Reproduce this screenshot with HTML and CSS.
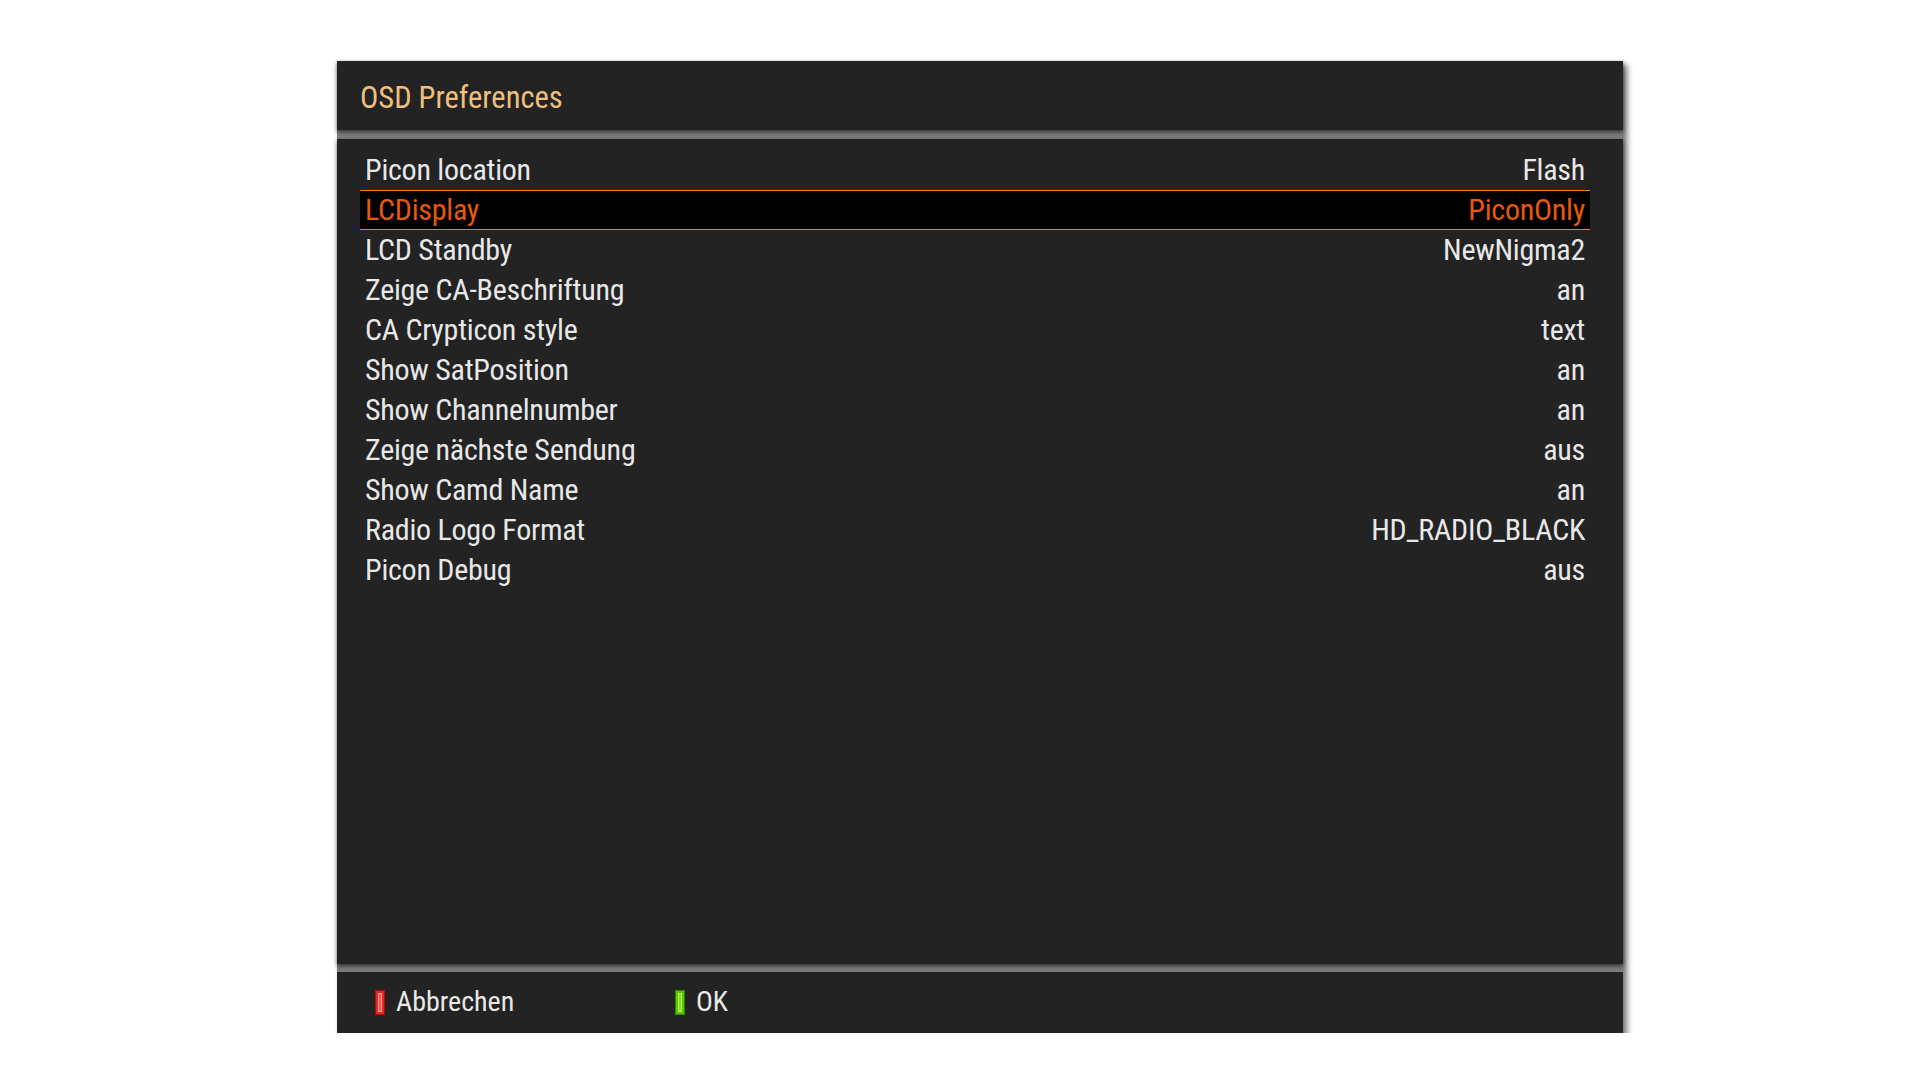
FILE: index.html
```html
<!DOCTYPE html>
<html>
<head>
<meta charset="utf-8">
<link rel="stylesheet" href="styles.css">
</head>
<body>
<div class="panel">
  <div class="header"><span class="title">OSD Preferences</span></div>
  <div class="body">
    <div class="row"><span>Picon location</span><span>Flash</span></div>
    <div class="row sel"><span>LCDisplay</span><span>PiconOnly</span></div>
    <div class="row"><span>LCD Standby</span><span>NewNigma2</span></div>
    <div class="row"><span>Zeige CA-Beschriftung</span><span>an</span></div>
    <div class="row"><span>CA Crypticon style</span><span>text</span></div>
    <div class="row"><span>Show SatPosition</span><span>an</span></div>
    <div class="row"><span>Show Channelnumber</span><span>an</span></div>
    <div class="row"><span>Zeige nächste Sendung</span><span>aus</span></div>
    <div class="row"><span>Show Camd Name</span><span>an</span></div>
    <div class="row"><span>Radio Logo Format</span><span>HD_RADIO_BLACK</span></div>
    <div class="row"><span>Picon Debug</span><span>aus</span></div>
  </div>
  <div class="footer">
    <div class="key">
      <svg width="10" height="25" viewBox="0 0 10 25"><rect x="0.5" y="0.5" width="9" height="24" fill="#e8262a" stroke="#b00c10"/><rect x="3.5" y="3.5" width="3" height="18" fill="#ff5050" stroke="#ff9a9a"/></svg>
      <span>Abbrechen</span>
    </div>
    <div class="key">
      <svg width="10" height="25" viewBox="0 0 10 25"><rect x="0.5" y="0.5" width="9" height="24" fill="#58c400" stroke="#2e8a00"/><rect x="3.5" y="3.5" width="3" height="18" fill="#7ee010" stroke="#b8f060"/></svg>
      <span>OK</span>
    </div>
  </div>
</div>
</body>
</html>
```
FILE: styles.css
```css
html, body {
  margin: 0;
  padding: 0;
  background: #ffffff;
}
body {
  font-family: "Roboto Condensed", Roboto, "Liberation Sans", sans-serif;
  font-stretch: 75%;
}
.panel {
  margin: 61px 0 0 337px;
  width: 1286px;
  height: 972px;
  background: #7c7c7c;
  display: flex;
  flex-direction: column;
  box-shadow: 4px 4px 6px rgba(0,0,0,0.55);
}
.header {
  height: 69px;
  background: #232323;
  display: flex;
  align-items: center;
  padding-left: 23px;
  box-shadow: 0 2px 4px rgba(0,0,0,0.6);
  position: relative;
  z-index: 1;
}
.title {
  color: #efbf7c;
  font-size: 30.5px;
  padding-top: 4px;
}
.body {
  margin-top: 9px;
  flex: 1;
  background: #232323;
  padding: 11px 33px 0 23px;
  box-shadow: 0 2px 4px rgba(0,0,0,0.6);
  position: relative;
  z-index: 1;
}
.row {
  height: 40px;
  box-sizing: border-box;
  display: flex;
  justify-content: space-between;
  align-items: center;
  padding: 0 5px 2px 5px;
  color: #e8e8e8;
  font-size: 30px;
  letter-spacing: -0.25px;
}
.row.sel {
  background: #000000;
  border-top: 1px solid #ff7a00;
  border-bottom: 1px solid #ff7a00;
  color: #e65a0c;
}
.footer {
  margin-top: 8px;
  height: 61px;
  background: #232323;
  display: flex;
  align-items: center;
  padding-left: 38px;
  padding-bottom: 2px;
  box-sizing: border-box;
}
.key {
  width: 300px;
  display: flex;
  align-items: center;
  gap: 11px;
  color: #e8e8e8;
  font-size: 28px;
}
.key svg {
  display: block;
  margin-top: 2px;
}
```
